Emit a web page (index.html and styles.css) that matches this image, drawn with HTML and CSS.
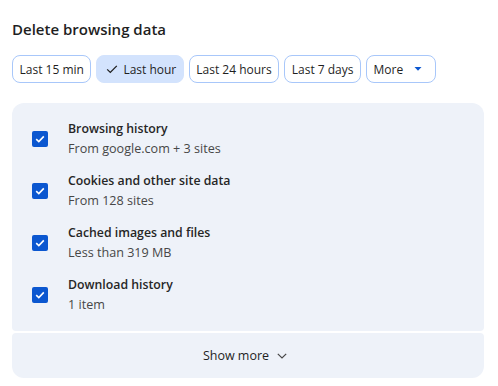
FILE: index.html
```html
<!DOCTYPE html>
<html>
<head>
<meta charset="utf-8">
<link rel="stylesheet" href="styles.css">
</head>
<body>
<div class="dialog">
  <h1 class="title">Delete browsing data</h1>
  <div class="chips">
    <button class="chip">Last 15 min</button>
    <button class="chip selected"><svg class="check" width="12" height="12" viewBox="0 0 12 12"><path d="M1.2 6.4 L4.3 9.4 L10.8 2.9" fill="none" stroke="#1f1f1f" stroke-width="1.3"/></svg>Last hour</button>
    <button class="chip">Last 24 hours</button>
    <button class="chip">Last 7 days</button>
    <button class="chip more">More<svg class="caret" width="8" height="4" viewBox="0 0 8 4"><path d="M0.5 0 L7.5 0 L4 3.8 Z" fill="#0b57d0"/></svg></button>
  </div>
  <div class="panel">
    <div class="row">
      <span class="cb"><svg width="16" height="16" viewBox="0 0 16 16"><path d="M4.2 8.2 L6.8 10.6 L11.8 5.4" fill="none" stroke="#fff" stroke-width="1.6"/></svg></span>
      <div class="text"><div class="name">Browsing history</div><div class="sub">From google.com + 3 sites</div></div>
    </div>
    <div class="row">
      <span class="cb"><svg width="16" height="16" viewBox="0 0 16 16"><path d="M4.2 8.2 L6.8 10.6 L11.8 5.4" fill="none" stroke="#fff" stroke-width="1.6"/></svg></span>
      <div class="text"><div class="name">Cookies and other site data</div><div class="sub">From 128 sites</div></div>
    </div>
    <div class="row">
      <span class="cb"><svg width="16" height="16" viewBox="0 0 16 16"><path d="M4.2 8.2 L6.8 10.6 L11.8 5.4" fill="none" stroke="#fff" stroke-width="1.6"/></svg></span>
      <div class="text"><div class="name">Cached images and files</div><div class="sub">Less than 319 MB</div></div>
    </div>
    <div class="row">
      <span class="cb"><svg width="16" height="16" viewBox="0 0 16 16"><path d="M4.2 8.2 L6.8 10.6 L11.8 5.4" fill="none" stroke="#fff" stroke-width="1.6"/></svg></span>
      <div class="text"><div class="name">Download history</div><div class="sub">1 item</div></div>
    </div>
  </div>
  <div class="showmore">Show more<svg class="chev" width="10" height="6" viewBox="0 0 10 6"><path d="M0.8 0.8 L5 5 L9.2 0.8" fill="none" stroke="#474747" stroke-width="1.2"/></svg></div>
</div>
</body>
</html>
```
FILE: styles.css
```css
html, body {
  margin: 0;
  padding: 0;
  background: #fff;
}
body {
  font-family: "Open Sans", "Noto Sans", sans-serif;
  color: #1f1f1f;
}
.dialog {
  padding: 16px 14px 0 12px;
  display: flex;
  flex-direction: column;
}
.title {
  margin: 0;
  font-size: 15px;
  font-weight: 600;
  line-height: 24px;
  height: 24px;
  padding-top: 1px;
}
.chips {
  display: flex;
  gap: 5px;
  margin-top: 14px;
}
.chip {
  font-family: inherit;
  font-size: 12px;
  font-weight: 500;
  color: #1f1f1f;
  background: #fff;
  border: 1px solid #a8c7fa;
  border-radius: 8px;
  height: 28px;
  padding: 0 6.5px;
  display: flex;
  align-items: center;
  gap: 5px;
  white-space: nowrap;
}
.chip.selected {
  background: #d3e3fd;
  border-color: #d3e3fd;
  padding-left: 9px;
}
.chip.more {
  gap: 11px;
  padding-right: 13px;
}
.caret { display: block; }
.panel {
  margin-top: 20px;
  background: #eef2f9;
  border-radius: 12px 12px 4px 4px;
  padding: 10px 0;
  display: flex;
  flex-direction: column;
}
.row {
  height: 52px;
  display: flex;
  align-items: center;
  padding-left: 20px;
  gap: 20px;
}
.cb {
  width: 16px;
  height: 16px;
  background: #0b57d0;
  border-radius: 2px;
  display: flex;
  flex: none;
}
.text {
  display: flex;
  flex-direction: column;
}
.name {
  font-size: 12.3px;
  font-weight: 600;
  line-height: 20px;
  color: #262626;
}
.sub {
  font-size: 12.6px;
  line-height: 20px;
  color: #474747;
}
.showmore {
  margin-top: 2px;
  height: 45px;
  background: #eef2f9;
  border-radius: 4px 4px 12px 12px;
  display: flex;
  align-items: center;
  justify-content: center;
  gap: 8px;
  font-size: 12.5px;
  font-weight: 500;
  color: #1f1f1f;
  padding-right: 6px;
}
.chev { display: block; }
```
